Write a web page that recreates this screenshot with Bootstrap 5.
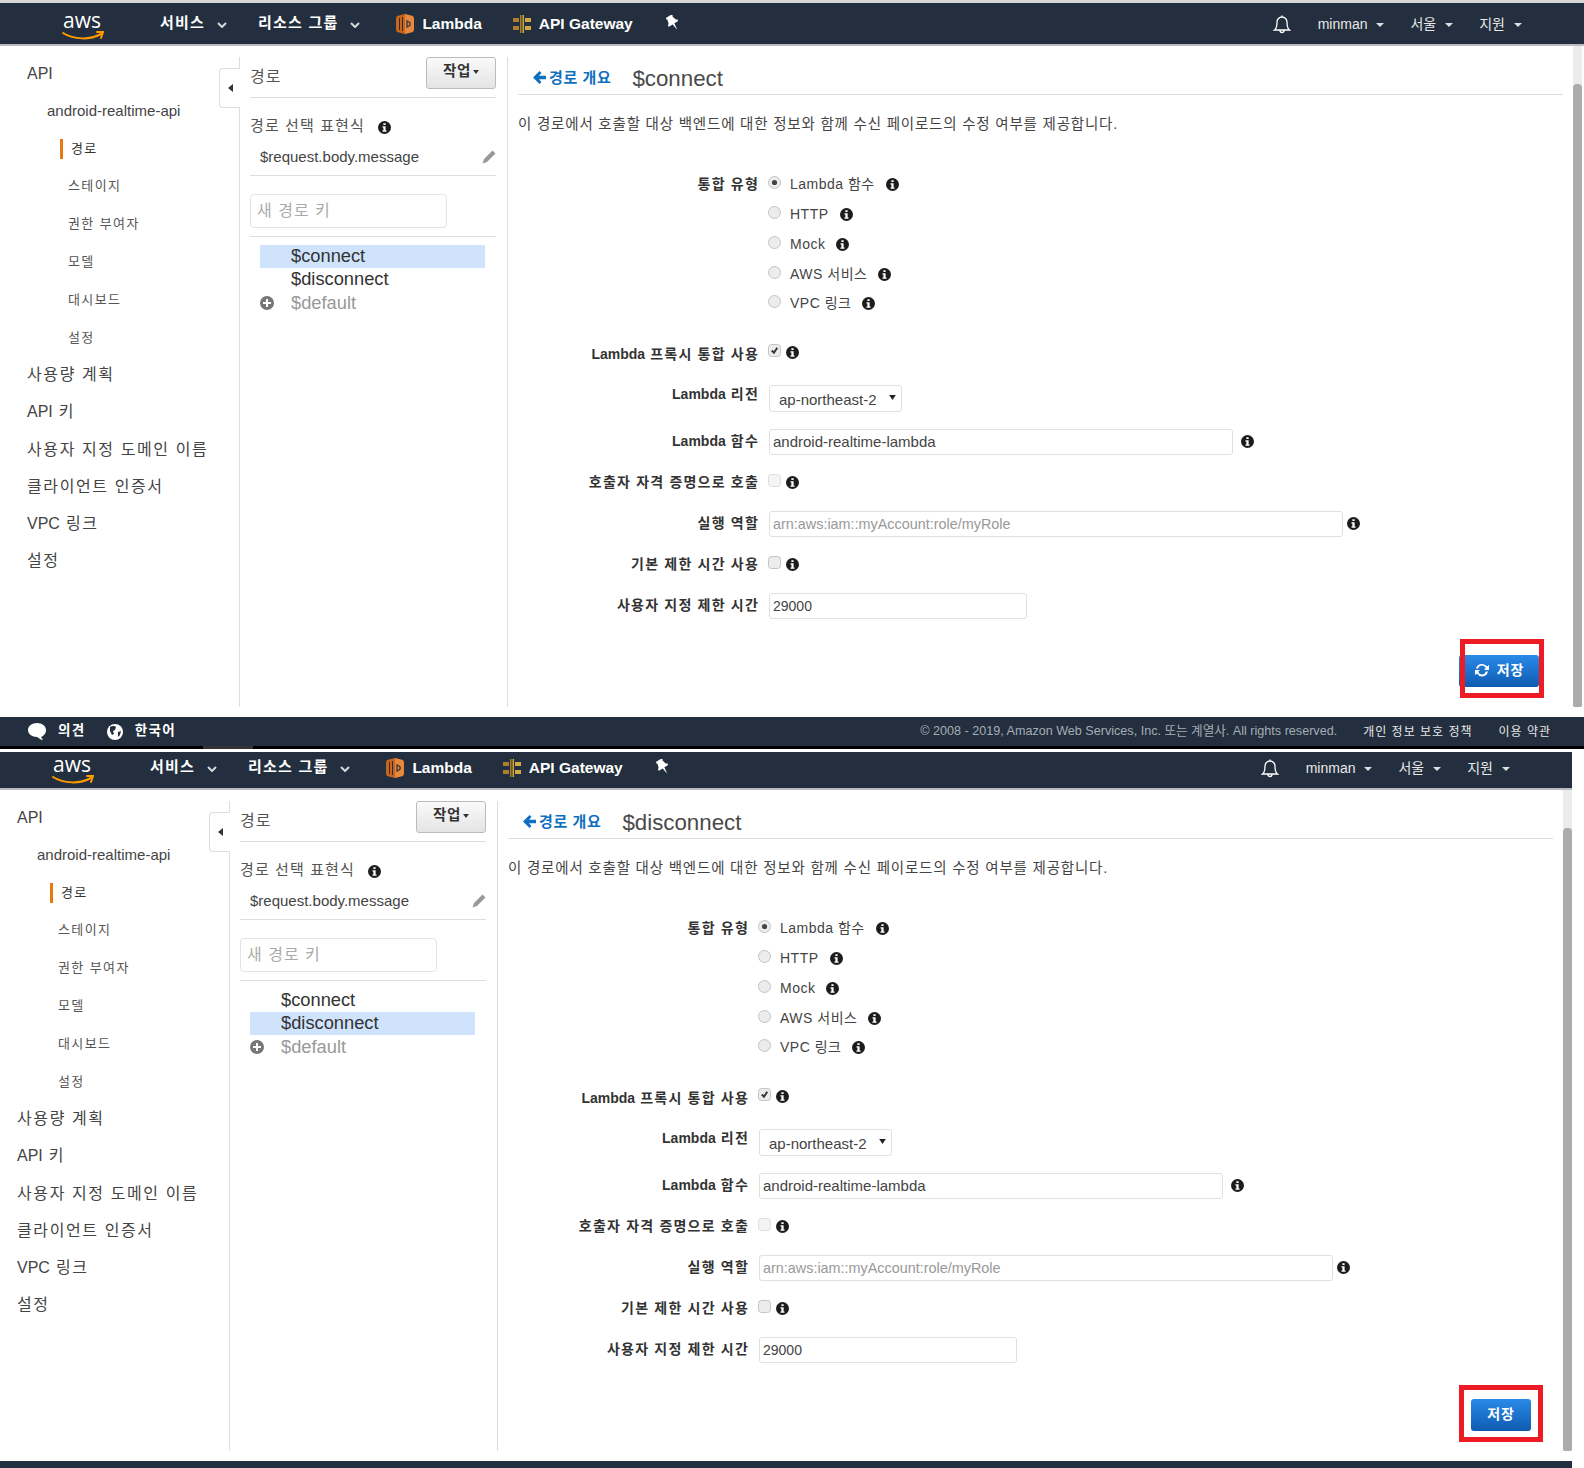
<!DOCTYPE html>
<html lang="ko">
<head>
    <meta charset="UTF-8">
    <title>API Gateway 경로</title>
    <link href="https://cdn.jsdelivr.net/npm/bootstrap@5.3.0/dist/css/bootstrap.min.css" rel="stylesheet">
    <style>
        html, body { height: 1468px; overflow: hidden; }
        body { background: #fff; color: #444; font-family: "Liberation Sans", "Noto Sans CJK KR", sans-serif; font-size: 14px; }
        .top-strip { height: 3px; background: #d5d5d5; }
        .shot-lower { width: 1582px; margin-left: -10px; margin-top: 3px; position: relative; }
        .shot-upper { position: relative; }

        /* top bar */
        .aws-bar { height: 43px; padding: 1px 62px 0 62px; background: #232f3e; border-bottom: 2px solid #b8bcc1; flex-wrap: nowrap; justify-content: flex-start; color: #fff; }
        .shot-lower .aws-bar { height: 38px; padding: 0 62px 4px 62px; }
        .aws-logo { width: 42px; height: 36px; }
        .bar-item { color: #fff; font-weight: bold; white-space: nowrap; }
        .bar-kr { font-size: 15px; letter-spacing: 1.2px; margin-top: -2px; }
        .bar-svc { font-size: 15.5px; }
        .bar-chev { width: 10px; height: 6px; margin: 2px 0 0 12px; }
        .bar-right { font-size: 14px; color: #e8e8e8; white-space: nowrap; }
        .bar-right::after { content: ""; display: inline-block; border-top: 4px solid #ddd; border-left: 4px solid transparent; border-right: 4px solid transparent; margin-left: 9px; vertical-align: 2px; }

        /* body of the console */
        .console-body { height: 671px; }
        .side-menu { width: 239px; flex: none; padding-top: 9px; }
        .side-menu li { white-space: nowrap; }
        .menu-top { height: 37.1px; line-height: 38px; padding-left: 27px; font-size: 16px; letter-spacing: 1.6px; }
        .no-track { letter-spacing: 0; }
        .menu-api { height: 37.5px; line-height: 37.5px; padding-left: 47px; font-size: 15px; }
        .menu-sub { height: 37.8px; line-height: 38.4px; padding-left: 68px; font-size: 13px; letter-spacing: 1.4px; color: #555; }
        .menu-active { display: inline-block; line-height: 20px; border-left: 3px solid #e8790f; margin-left: -8px; padding-left: 8px; color: #333; }

        .route-col { width: 269px; flex: none; position: relative; margin: 11px 0 10px; padding: 0 11px 0 10px; border-left: 1px solid #ddd; border-right: 1px solid #ddd; }
        .collapse-tab { position: absolute; left: -21px; top: 11px; width: 21px; height: 40px; background: #fff; border: 1px solid #ddd; border-right: 0; border-radius: 4px 0 0 4px; display: flex; align-items: center; justify-content: center; }
        .collapse-tab i { display: block; border-right: 5px solid #333; border-top: 4px solid transparent; border-bottom: 4px solid transparent; }
        .route-head { height: 41px; border-bottom: 1px solid #ddd; align-items: flex-start; }
        .route-title { font-size: 16px; line-height: 40px; letter-spacing: 1px; color: #555; }
        .act-btn { width: 70px; height: 32px; padding: 0 0 3px; font-size: 14.5px; font-weight: bold; letter-spacing: .6px; color: #333; background: linear-gradient(#fafafa, #e4e4e4); border: 1px solid #bbb; border-radius: 3px; }
        .act-btn.dropdown-toggle::after { margin-left: 2px; border-width: 4px 3.5px 0; vertical-align: 2px; }
        .expr-head { height: 20px; line-height: 20px; margin-top: 18px; font-size: 15px; letter-spacing: 1.1px; color: #555; }
        .expr-val { height: 29px; margin-top: 11px; padding: 0 0 8px 10px; line-height: 20px; font-size: 15px; border-bottom: 1px solid #ddd; }
        .key-input { width: 197px; height: 34px; margin-top: 18px; padding: 0 6px; font-size: 16px; letter-spacing: 1px; border: 1px solid #e4e4e4; border-radius: 4px; }
        .key-input::placeholder { color: #aaa; }
        .thin-line { height: 1px; margin-top: 8px; background: #ddd; }
        .route-list { margin: 8px 11px 0 10px; font-size: 18.3px; color: #333; }
        .route-list li { height: 23px; line-height: 22px; padding-left: 31px; }
        .route-list li.picked { background: #cfe4fc; }
        .route-list li.route-default { color: #999; padding-left: 0; display: flex; align-items: center; }
        .plus-box { width: 31px; flex: none; display: flex; }

        .main-col { width: 1065px; flex: none; margin: 11px 0 10px; padding: 0 10px; }
        .title-row { height: 38px; padding: 6px 0 0 15px; border-bottom: 1px solid #ddd; }
        .back-link { color: #0f6fc0; font-size: 15px; font-weight: bold; letter-spacing: .6px; text-decoration: none; white-space: nowrap; }
        .back-link svg { margin-right: 3px; vertical-align: -1px; }
        .route-name { font-size: 22.3px; line-height: 31px; color: #4a4a4a; margin-left: 21px; }
        .desc-text { height: 20px; line-height: 20px; margin: 19px 0 0; font-size: 14.5px; letter-spacing: .8px; white-space: nowrap; }
        .radio-block { margin-top: 36px; }
        .field-row { display: flex; align-items: center; }
        .radio-row { height: 29.75px; }
        .field-label { width: 241px; flex: none; margin-right: 9px; text-align: right; font-weight: bold; font-size: 14px; letter-spacing: 1.2px; color: #333; white-space: nowrap; }
        .field-label b { letter-spacing: 0; }
        .label-up { padding-bottom: 8px; }
        .label-down { padding-top: 4px; }
        .radio-text { margin-left: 9px; font-size: 14px; letter-spacing: .5px; white-space: nowrap; }
        .info-mark { width: 13px; height: 13px; flex: none; }
        .radio-row .info-mark { margin-left: 11px; }
        .check-row .info-mark { margin-left: 5px; }
        .form-check-input.con-box { width: 13px; height: 13px; margin: -4px 0 0 0; background-color: #ececec; border: 1px solid #c4c4c4; opacity: 1; flex: none; }
        .form-check-input.con-box.faded { background-color: #f4f4f4; border-color: #ddd; }
        .form-check-input.con-box[type=radio]:checked { background-color: #ececec; border-color: #c4c4c4; background-image: url("data:image/svg+xml,%3csvg xmlns='http://www.w3.org/2000/svg' viewBox='-4 -4 8 8'%3e%3ccircle r='1.9' fill='%23444'/%3e%3c/svg%3e"); }
        .form-check-input.con-box[type=checkbox]:checked { background-color: #ececec; border-color: #c4c4c4; background-image: url("data:image/svg+xml,%3csvg xmlns='http://www.w3.org/2000/svg' viewBox='0 0 20 20'%3e%3cpath fill='none' stroke='%23333' stroke-width='3.5' d='m5 10 4 4 6-9'/%3e%3c/svg%3e"); }
        .con-input { height: 26px; margin-left: 1px; padding: 0 3px; font-size: 15px; color: #444; border: 1px solid #e0e0e0; border-radius: 3px; }
        .con-input::placeholder { color: #999; }
        .con-input.wide-fn { width: 464px; }
        .con-input.wide-role { width: 574px; font-size: 14.4px; }
        .con-input.wide-time { width: 258px; font-size: 14px; }
        .con-select { width: 133px; height: 27px; margin-left: 1px; padding: 3px 0 0 9px; font-size: 15px; color: #444; border: 1px solid #e0e0e0; border-radius: 3px; background-size: 7px 5px; background-position: right 5px top 9px; background-image: url("data:image/svg+xml,%3csvg xmlns='http://www.w3.org/2000/svg' viewBox='0 0 8 6'%3e%3cpath fill='%23222' d='M0 0h8L4 6z'/%3e%3c/svg%3e"); }
        .after-input { margin-left: 8px; }
        .after-role { margin-left: 4px; }
        .row-proxy { height: 34px; margin-top: 17px; }
        .row-region { height: 27px; margin-top: 15px; }
        .row-fn { height: 26px; margin-top: 17px; }
        .row-caller { height: 20px; margin-top: 18px; }
        .row-role { height: 26px; margin-top: 18px; }
        .row-default { height: 20px; margin-top: 18px; }
        .row-time { height: 26px; margin-top: 18px; }
        .save-line { margin-top: 36px; padding-right: 24px; }
        .save-btn { height: 32px; width: 80px; padding: 0; font-size: 14px; font-weight: bold; letter-spacing: .8px; color: #fff; background: linear-gradient(#2b8ae8, #0e5bb0); border: 0; border-radius: 3px; }
        .save-btn.plain { width: 60px; margin-right: -2px; }
        .save-btn svg { margin-right: 7px; vertical-align: -2px; }

        .fake-track { width: 9px; flex: none; margin-bottom: 10px; padding-top: 38px; background: #ececec; display: flex; }
        .fake-thumb { width: 9px; background: #ababab; border-radius: 4px 4px 2px 2px; }

        /* red marks over the shot */
        .red-mark { position: absolute; border: 5px solid #ed1c24; pointer-events: none; }
        .mark-up { left: 1460px; top: 636px; width: 84px; height: 59px; }
        .mark-down { left: 1469px; top: 633px; width: 84px; height: 57px; }

        /* footer */
        .foot-bar { height: 29px; padding: 0 33px 0 28px; background: #232f3e; color: #fff; white-space: nowrap; }
        .foot-link { font-size: 13.5px; font-weight: bold; letter-spacing: 1.4px; }
        .foot-copy { font-size: 12.6px; color: #a5acb4; }
        .foot-small { font-size: 12px; letter-spacing: 1px; color: #e6e6e6; }
        .foot-black { height: 3px; background: #000; padding-left: 203px; }
        .foot-black i { display: block; width: 50px; height: 3px; background: #333; }
        .foot-clip { height: 7px; background: #232f3e; }
    </style>
</head>
<body>
    <svg width="0" height="0" class="position-absolute">
        <symbol id="ic-info" viewBox="0 0 14 14"><path fill-rule="evenodd" fill="#1c1c1c" d="M7 0a7 7 0 1 1 0 14A7 7 0 0 1 7 0ZM5.8 2.4v2h2.4v-2ZM4.8 5.6v1.3h1v3.3h-1v1.4h4.4v-1.4h-1V5.6Z"/></symbol>
        <symbol id="ic-chev" viewBox="0 0 10 6"><path fill="none" stroke="#d5d8dc" stroke-width="2" d="m1 1 4 4 4-4"/></symbol>
        <symbol id="ic-lambda" viewBox="0 0 18 20"><path fill="#c8651b" d="M9 0 1 2 0 4v12l1 2 8 2Z"/><path fill="#e8883a" d="m9 0 8 2 1 2v12l-1 2-8 2Z"/><path fill="#232f3e" d="M3 4h1v12H3Zm3-1h1v14H6Z"/><path fill="none" stroke="#232f3e" stroke-width="1.2" d="M11 7v6l3-1.500v-3Z"/></symbol>
        <symbol id="ic-gate" viewBox="0 0 18 18"><path fill="#a9812a" d="M7 0h1.500v18H7ZM0 3h6v4H0Zm0 8h6v4H0Z"/><path fill="#d4a93f" d="M9.500 0H11v18H9.500ZM12 3h6v4h-6Zm0 8h6v4h-6Z"/></symbol>
        <symbol id="ic-pin" viewBox="0 0 14 16"><path fill="#fff" d="M4 0h6l1 1-1 1 1 4 2 2-1 1H8l-1 7-1-7H2L1 8l2-2 1-4-1-1Z" transform="rotate(-32 7 8)"/></symbol>
        <symbol id="ic-bell" viewBox="0 0 18 20"><path fill="none" stroke="#fff" stroke-width="1.3" d="M1.500 16c2-1.500 2.500-3 2.500-8a5 5 0 0 1 10 0c0 5 .5 6.500 2.500 8ZM7 16.500a2 2 0 0 0 4 0M9 3V1.500"/></symbol>
        <symbol id="ic-pencil" viewBox="0 0 14 14"><path fill="#999" d="M10.500.5 13.500 3.500 5 12 .5 13.500 2 9Z"/></symbol>
        <symbol id="ic-plus" viewBox="0 0 14 14"><path fill-rule="evenodd" fill="#777" d="M7 0a7 7 0 1 1 0 14A7 7 0 0 1 7 0ZM6 3v3H3v2h3v3h2V8h3V6H8V3Z"/></symbol>
        <symbol id="ic-back" viewBox="0 0 13 13"><path fill="#0f6fc0" d="M6.500 0 8.500 2 6 4.800h7v3.400H6L8.500 11l-2 2L0 6.500Z"/></symbol>
        <symbol id="ic-sync" viewBox="0 0 16 14"><path fill="#fff" d="M8 1a6 6 0 0 1 5 2.500L15 2v5h-5l1.800-1.800A4 4 0 0 0 4.200 5.500H2A6 6 0 0 1 8 1ZM1 7h5L4.200 8.800a4 4 0 0 0 7.600-.300H14A6 6 0 0 1 3 10.500L1 12Z"/></symbol>
        <symbol id="ic-bubble" viewBox="0 0 18 17"><path fill="#fff" d="M9 0c5 0 9 3 9 7s-3 6.500-5 7l2 3c-3-.5-5-2.500-6-3-5 0-9-3-9-7s4-7 9-7Z"/></symbol>
        <symbol id="ic-globe" viewBox="0 0 16 16"><circle cx="8" cy="8" r="8" fill="#fff"/><path fill="#232f3e" d="M3 3c2-1.500 5-1 6 0l-1 3-2 1 1 3-2 1-2-4Zm8 5 3-1-1 4-2 2Z"/></symbol>
    </svg>

    <div class="top-strip"></div>
    <div class="shot-upper">
        <nav class="navbar aws-bar d-flex align-items-center">
            <svg class="aws-logo" viewBox="0 0 42 36"><text x="1" y="22" font-family="Open Sans, sans-serif" font-size="21" fill="#fff">aws</text><path fill="none" stroke="#f90" stroke-width="2" stroke-linecap="round" d="M1 27c11 7 27 7 38 1"/><path fill="none" stroke="#f90" stroke-width="2" stroke-linecap="round" d="M35 26h6l-2 6"/></svg>
            <span class="bar-item bar-kr ms-5 ps-2">서비스</span><svg class="bar-chev"><use href="#ic-chev"/></svg>
            <span class="bar-item bar-kr" style="margin-left:31px">리소스 그룹</span><svg class="bar-chev"><use href="#ic-chev"/></svg>
            <svg width="18" height="20" style="margin-left:36px"><use href="#ic-lambda"/></svg>
            <span class="bar-item bar-svc ms-2">Lambda</span>
            <svg width="18" height="18" style="margin-left:31px"><use href="#ic-gate"/></svg>
            <span class="bar-item bar-svc ms-2">API Gateway</span>
            <svg width="14" height="16" style="margin:-2px 0 0 33px"><use href="#ic-pin"/></svg>
            <svg width="18" height="20" class="ms-auto"><use href="#ic-bell"/></svg>
            <span class="bar-right" style="margin-left:27px">minman</span>
            <span class="bar-right" style="margin-left:26px">서울</span>
            <span class="bar-right" style="margin-left:26px">지원</span>
        </nav>
        <div class="console-body d-flex">
            <ul class="side-menu list-unstyled mb-0">
                <li class="menu-top no-track">API</li>
                <li class="menu-api">android-realtime-api</li>
                <li class="menu-sub"><span class="menu-active">경로</span></li>
                <li class="menu-sub">스테이지</li>
                <li class="menu-sub">권한 부여자</li>
                <li class="menu-sub">모델</li>
                <li class="menu-sub">대시보드</li>
                <li class="menu-sub">설정</li>
                <li class="menu-top">사용량 계획</li>
                <li class="menu-top"><span class="no-track">API</span> 키</li>
                <li class="menu-top">사용자 지정 도메인 이름</li>
                <li class="menu-top">클라이언트 인증서</li>
                <li class="menu-top"><span class="no-track">VPC</span> 링크</li>
                <li class="menu-top">설정</li>
            </ul>
            <div class="route-col">
                <div class="collapse-tab"><i></i></div>
                <div class="route-head d-flex justify-content-between">
                    <span class="route-title">경로</span>
                    <button class="btn act-btn dropdown-toggle" type="button">작업</button>
                </div>
                <div class="expr-head">경로 선택 표현식 <svg class="info-mark ms-2"><use href="#ic-info"/></svg></div>
                <div class="expr-val d-flex justify-content-between align-items-center">$request.body.message <svg width="14" height="14"><use href="#ic-pencil"/></svg></div>
                <input class="form-control key-input" type="text" placeholder="새 경로 키">
                <div class="thin-line"></div>
                <ul class="route-list list-unstyled mb-0">
                    <li class="picked">$connect</li>
                    <li>$disconnect</li>
                    <li class="route-default"><span class="plus-box"><svg width="14" height="14"><use href="#ic-plus"/></svg></span>$default</li>
                </ul>
            </div>
            <div class="main-col">
                <div class="title-row d-flex align-items-center">
                    <a class="back-link" href="#"><svg width="13" height="13"><use href="#ic-back"/></svg>경로 개요</a>
                    <span class="route-name">$connect</span>
                </div>
                <p class="desc-text">이 경로에서 호출할 대상 백엔드에 대한 정보와 함께 수신 페이로드의 수정 여부를 제공합니다.</p>
                <div class="radio-block">
                    <div class="field-row radio-row"><span class="field-label">통합 유형</span><input class="form-check-input con-box" type="radio" name="t1" checked><span class="radio-text">Lambda 함수</span><svg class="info-mark"><use href="#ic-info"/></svg></div>
                    <div class="field-row radio-row"><span class="field-label"></span><input class="form-check-input con-box" type="radio" name="t1"><span class="radio-text">HTTP</span><svg class="info-mark"><use href="#ic-info"/></svg></div>
                    <div class="field-row radio-row"><span class="field-label"></span><input class="form-check-input con-box" type="radio" name="t1"><span class="radio-text">Mock</span><svg class="info-mark"><use href="#ic-info"/></svg></div>
                    <div class="field-row radio-row"><span class="field-label"></span><input class="form-check-input con-box" type="radio" name="t1"><span class="radio-text">AWS 서비스</span><svg class="info-mark"><use href="#ic-info"/></svg></div>
                    <div class="field-row radio-row"><span class="field-label"></span><input class="form-check-input con-box" type="radio" name="t1"><span class="radio-text">VPC 링크</span><svg class="info-mark"><use href="#ic-info"/></svg></div>
                </div>
                <div class="field-row check-row row-proxy"><span class="field-label label-down"><b>Lambda</b> 프록시 통합 사용</span><input class="form-check-input con-box" type="checkbox" checked><svg class="info-mark"><use href="#ic-info"/></svg></div>
                <div class="field-row row-region"><span class="field-label label-up"><b>Lambda</b> 리전</span><select class="form-select con-select"><option>ap-northeast-2</option></select></div>
                <div class="field-row row-fn"><span class="field-label"><b>Lambda</b> 함수</span><input class="form-control con-input wide-fn" type="text" value="android-realtime-lambda"><svg class="info-mark after-input"><use href="#ic-info"/></svg></div>
                <div class="field-row check-row row-caller"><span class="field-label">호출자 자격 증명으로 호출</span><input class="form-check-input con-box faded" type="checkbox"><svg class="info-mark"><use href="#ic-info"/></svg></div>
                <div class="field-row row-role"><span class="field-label">실행 역할</span><input class="form-control con-input wide-role" type="text" placeholder="arn:aws:iam::myAccount:role/myRole"><svg class="info-mark after-role"><use href="#ic-info"/></svg></div>
                <div class="field-row check-row row-default"><span class="field-label">기본 제한 시간 사용</span><input class="form-check-input con-box" type="checkbox"><svg class="info-mark"><use href="#ic-info"/></svg></div>
                <div class="field-row row-time"><span class="field-label">사용자 지정 제한 시간</span><input class="form-control con-input wide-time" type="text" value="29000"></div>
                <div class="save-line text-end"><button class="btn save-btn" type="button"><svg width="16" height="14"><use href="#ic-sync"/></svg>저장</button></div>
            </div>
            <div class="fake-track"><div class="fake-thumb"></div></div>
        </div>
        <div class="foot-bar d-flex align-items-center">
            <svg width="18" height="17"><use href="#ic-bubble"/></svg>
            <span class="foot-link ms-2 ps-1">의견</span>
            <svg width="16" height="16" style="margin-left:21px"><use href="#ic-globe"/></svg>
            <span class="foot-link ms-2 ps-1">한국어</span>
            <span class="foot-copy ms-auto">© 2008 - 2019, Amazon Web Services, Inc. 또는 계열사. All rights reserved.</span>
            <span class="foot-small" style="margin-left:26px">개인 정보 보호 정책</span>
            <span class="foot-small" style="margin-left:26px">이용 약관</span>
        </div>
        <div class="foot-black"><i></i></div>
        <div class="red-mark mark-up"></div>
    </div>

    <div class="shot-lower">
        <nav class="navbar aws-bar d-flex align-items-center">
            <svg class="aws-logo" viewBox="0 0 42 36"><text x="1" y="22" font-family="Open Sans, sans-serif" font-size="21" fill="#fff">aws</text><path fill="none" stroke="#f90" stroke-width="2" stroke-linecap="round" d="M1 27c11 7 27 7 38 1"/><path fill="none" stroke="#f90" stroke-width="2" stroke-linecap="round" d="M35 26h6l-2 6"/></svg>
            <span class="bar-item bar-kr ms-5 ps-2">서비스</span><svg class="bar-chev"><use href="#ic-chev"/></svg>
            <span class="bar-item bar-kr" style="margin-left:31px">리소스 그룹</span><svg class="bar-chev"><use href="#ic-chev"/></svg>
            <svg width="18" height="20" style="margin-left:36px"><use href="#ic-lambda"/></svg>
            <span class="bar-item bar-svc ms-2">Lambda</span>
            <svg width="18" height="18" style="margin-left:31px"><use href="#ic-gate"/></svg>
            <span class="bar-item bar-svc ms-2">API Gateway</span>
            <svg width="14" height="16" style="margin:-2px 0 0 33px"><use href="#ic-pin"/></svg>
            <svg width="18" height="20" class="ms-auto"><use href="#ic-bell"/></svg>
            <span class="bar-right" style="margin-left:27px">minman</span>
            <span class="bar-right" style="margin-left:26px">서울</span>
            <span class="bar-right" style="margin-left:26px">지원</span>
        </nav>
        <div class="console-body d-flex">
            <ul class="side-menu list-unstyled mb-0">
                <li class="menu-top no-track">API</li>
                <li class="menu-api">android-realtime-api</li>
                <li class="menu-sub"><span class="menu-active">경로</span></li>
                <li class="menu-sub">스테이지</li>
                <li class="menu-sub">권한 부여자</li>
                <li class="menu-sub">모델</li>
                <li class="menu-sub">대시보드</li>
                <li class="menu-sub">설정</li>
                <li class="menu-top">사용량 계획</li>
                <li class="menu-top"><span class="no-track">API</span> 키</li>
                <li class="menu-top">사용자 지정 도메인 이름</li>
                <li class="menu-top">클라이언트 인증서</li>
                <li class="menu-top"><span class="no-track">VPC</span> 링크</li>
                <li class="menu-top">설정</li>
            </ul>
            <div class="route-col">
                <div class="collapse-tab"><i></i></div>
                <div class="route-head d-flex justify-content-between">
                    <span class="route-title">경로</span>
                    <button class="btn act-btn dropdown-toggle" type="button">작업</button>
                </div>
                <div class="expr-head">경로 선택 표현식 <svg class="info-mark ms-2"><use href="#ic-info"/></svg></div>
                <div class="expr-val d-flex justify-content-between align-items-center">$request.body.message <svg width="14" height="14"><use href="#ic-pencil"/></svg></div>
                <input class="form-control key-input" type="text" placeholder="새 경로 키">
                <div class="thin-line"></div>
                <ul class="route-list list-unstyled mb-0">
                    <li>$connect</li>
                    <li class="picked">$disconnect</li>
                    <li class="route-default"><span class="plus-box"><svg width="14" height="14"><use href="#ic-plus"/></svg></span>$default</li>
                </ul>
            </div>
            <div class="main-col">
                <div class="title-row d-flex align-items-center">
                    <a class="back-link" href="#"><svg width="13" height="13"><use href="#ic-back"/></svg>경로 개요</a>
                    <span class="route-name">$disconnect</span>
                </div>
                <p class="desc-text">이 경로에서 호출할 대상 백엔드에 대한 정보와 함께 수신 페이로드의 수정 여부를 제공합니다.</p>
                <div class="radio-block">
                    <div class="field-row radio-row"><span class="field-label">통합 유형</span><input class="form-check-input con-box" type="radio" name="t2" checked><span class="radio-text">Lambda 함수</span><svg class="info-mark"><use href="#ic-info"/></svg></div>
                    <div class="field-row radio-row"><span class="field-label"></span><input class="form-check-input con-box" type="radio" name="t2"><span class="radio-text">HTTP</span><svg class="info-mark"><use href="#ic-info"/></svg></div>
                    <div class="field-row radio-row"><span class="field-label"></span><input class="form-check-input con-box" type="radio" name="t2"><span class="radio-text">Mock</span><svg class="info-mark"><use href="#ic-info"/></svg></div>
                    <div class="field-row radio-row"><span class="field-label"></span><input class="form-check-input con-box" type="radio" name="t2"><span class="radio-text">AWS 서비스</span><svg class="info-mark"><use href="#ic-info"/></svg></div>
                    <div class="field-row radio-row"><span class="field-label"></span><input class="form-check-input con-box" type="radio" name="t2"><span class="radio-text">VPC 링크</span><svg class="info-mark"><use href="#ic-info"/></svg></div>
                </div>
                <div class="field-row check-row row-proxy"><span class="field-label label-down"><b>Lambda</b> 프록시 통합 사용</span><input class="form-check-input con-box" type="checkbox" checked><svg class="info-mark"><use href="#ic-info"/></svg></div>
                <div class="field-row row-region"><span class="field-label label-up"><b>Lambda</b> 리전</span><select class="form-select con-select"><option>ap-northeast-2</option></select></div>
                <div class="field-row row-fn"><span class="field-label"><b>Lambda</b> 함수</span><input class="form-control con-input wide-fn" type="text" value="android-realtime-lambda"><svg class="info-mark after-input"><use href="#ic-info"/></svg></div>
                <div class="field-row check-row row-caller"><span class="field-label">호출자 자격 증명으로 호출</span><input class="form-check-input con-box faded" type="checkbox"><svg class="info-mark"><use href="#ic-info"/></svg></div>
                <div class="field-row row-role"><span class="field-label">실행 역할</span><input class="form-control con-input wide-role" type="text" placeholder="arn:aws:iam::myAccount:role/myRole"><svg class="info-mark after-role"><use href="#ic-info"/></svg></div>
                <div class="field-row check-row row-default"><span class="field-label">기본 제한 시간 사용</span><input class="form-check-input con-box" type="checkbox"><svg class="info-mark"><use href="#ic-info"/></svg></div>
                <div class="field-row row-time"><span class="field-label">사용자 지정 제한 시간</span><input class="form-control con-input wide-time" type="text" value="29000"></div>
                <div class="save-line text-end"><button class="btn save-btn plain" type="button">저장</button></div>
            </div>
            <div class="fake-track"><div class="fake-thumb"></div></div>
        </div>
        <div class="foot-clip"></div>
        <div class="red-mark mark-down"></div>
    </div>
</body>
</html>
